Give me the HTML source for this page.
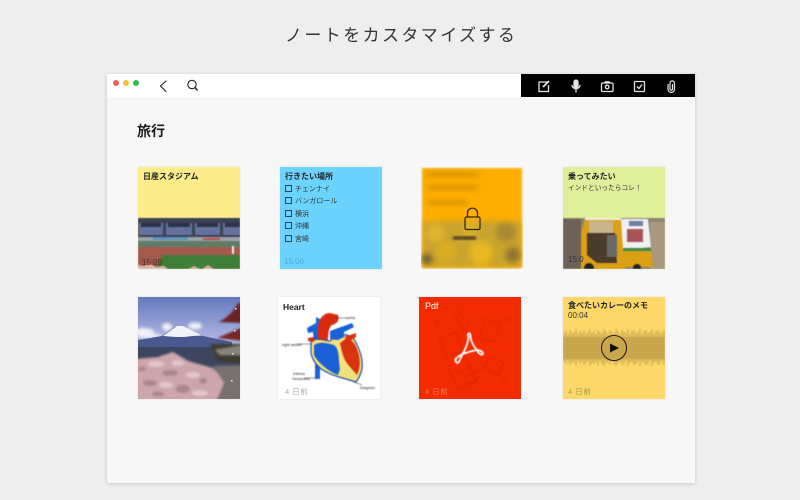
<!DOCTYPE html>
<html lang="ja"><head><meta charset="utf-8">
<style>
html,body{margin:0;padding:0}
body{width:800px;height:500px;background:#eeeeee;overflow:hidden;position:relative;font-family:"Liberation Sans","Noto Sans CJK JP",sans-serif;color:#222}
.title{position:absolute;left:285px;top:24px;font-size:17px;line-height:24px;letter-spacing:2.4px;color:#333;white-space:nowrap}
.win{position:absolute;left:107px;top:74px;width:588px;height:409px;background:#f7f7f7;box-shadow:0 1px 4px rgba(0,0,0,.16)}
.bar{position:absolute;left:107px;top:74px;width:588px;height:23px;background:#fff}
.blk{position:absolute;left:521px;top:74px;width:174px;height:23px;background:#000}
.dot{position:absolute;top:80px;width:6px;height:6px;border-radius:50%}
.h{position:absolute;left:137px;top:121px;font-size:14px;line-height:20px;font-weight:700;color:#1a1a1a}
.card{position:absolute;width:102px;height:102px;overflow:hidden;box-shadow:0 0 2px rgba(0,0,0,.1)}
.t{position:absolute;white-space:nowrap;font-size:8px;line-height:12px}
.b{font-weight:700;color:#222}
.list{font-size:7px;color:#333;left:15px}
.cb{position:absolute;left:5px;width:5px;height:5px;border:1px solid #2f4450}
svg{display:block;position:absolute;left:0;top:0}
.soft{filter:blur(.4px)}
</style></head><body>
<div class="title">ノートをカスタマイズする</div>
<div class="win"></div><div class="bar"></div><div class="blk"></div>
<div class="dot" style="left:113px;background:#ec5f5f"></div>
<div class="dot" style="left:123px;background:#f2c13b"></div>
<div class="dot" style="left:133px;background:#2fbe4a"></div>
<svg style="left:155px;top:76px" width="50" height="20" fill="none" stroke="#222" stroke-width="1.100"><path d="M11 5L5.500 10L11 15.500" stroke-linecap="round"/><circle cx="37" cy="8.500" r="4.200"/><path d="M40 11.500L42.500 14.500" stroke-width="1.500"/></svg>
<svg style="left:521px;top:74px" width="174" height="23" fill="none" stroke="#e4e4e4" stroke-width="1.300">
<path d="M26.500 8H18V17.500H27.500V11"/><path d="M22 13L28 7" stroke-width="1.900"/>
<rect x="53" y="6" width="4" height="8" rx="2" fill="#e4e4e4"/><path d="M51 11C51 16 59 16 59 11M55 15V18.500"/>
<rect x="80.500" y="9" width="11.500" height="8.500" rx="1"/><path d="M83.500 9L84.500 7.800H88L89 9"/><circle cx="86.200" cy="13" r="1.800"/>
<rect x="113.500" y="7.500" width="10" height="10" rx="1"/><path d="M116 12.500L118 14.500L121 10.500"/>
<path d="M147 10V15C147 19.500 153.500 19.500 153.500 15V9.500C153.500 6 149 6 149 9.500V15C149 16.500 151.500 16.500 151.500 15V10" stroke-width="1.200"/></svg>
<div class="h">旅行</div>

<!-- 1 -->
<div class="card" style="left:138px;top:167px;background:#fdec8a">
<svg class="soft" width="102" height="102">
<rect y="51" width="102" height="51" fill="#3b4254"/>
<g fill="#66709f"><rect x="1" y="56" width="24" height="12"/><rect x="28" y="56" width="26" height="12"/><rect x="57" y="56" width="25" height="12"/><rect x="85" y="56" width="17" height="12"/></g>
<g fill="#2c3248"><rect x="3" y="56" width="20" height="4"/><rect x="30" y="56" width="22" height="4"/><rect x="59" y="56" width="21" height="4"/><rect x="87" y="56" width="15" height="4"/></g>
<rect y="70" width="102" height="4" fill="#9aa4a8"/><rect x="15" y="70" width="35" height="3" fill="#5d93bd"/>
<rect x="65" y="71" width="17" height="2" fill="#c24848"/>
<rect y="74" width="102" height="7" fill="#5f7d66"/>
<rect y="80" width="102" height="9" fill="#a65a4c"/>
<path d="M0 88H102V102H0Z" fill="#9c5a4d"/><path d="M25 88H102V102H17Z" fill="#3f7d39"/>
<rect x="94" y="79" width="2" height="8" fill="#eee"/>
<path d="M0 98L6 99L12 97L18 100L26 99L30 102H0Z" fill="#d9b8b0"/><path d="M50 102L56 99L62 102M64 102L70 98L76 102" fill="#d8a8a0"/></svg>
<div class="t b" style="left:5px;top:4px">日産スタジアム</div>
<div class="t" style="left:4px;top:90px;color:#5b2a1f">15:09</div></div>

<!-- 2 -->
<div class="card" style="left:280px;top:167px;background:#6bd3fe">
<div class="t b" style="left:5px;top:4px">行きたい場所</div>
<div class="cb" style="top:18px"></div><div class="t list" style="top:17px">チェンナイ</div>
<div class="cb" style="top:30px"></div><div class="t list" style="top:29px">バンガロール</div>
<div class="cb" style="top:43px"></div><div class="t list" style="top:42px">横浜</div>
<div class="cb" style="top:55px"></div><div class="t list" style="top:54px">沖縄</div>
<div class="cb" style="top:68px"></div><div class="t list" style="top:67px">宮崎</div>
<div class="t" style="left:4px;top:89px;color:#4ea8d0">15:06</div></div>

<!-- 3 -->
<div class="card" style="left:421px;top:167px;box-shadow:none;background:#f7f7f7">
<svg width="102" height="102"><defs><filter id="bl" x="-10%" y="-10%" width="120%" height="120%"><feGaussianBlur stdDeviation="3"/></filter><filter id="bl2"><feGaussianBlur stdDeviation="1"/></filter></defs>
<g filter="url(#bl2)"><rect x="1" y="1" width="100" height="100" fill="#ffae00"/></g>
<g filter="url(#bl)">
<rect x="2" y="54" width="98" height="46" fill="#c9a32d"/>
<rect x="5" y="6" width="52" height="3" fill="#b8820e"/><rect x="6" y="19" width="50" height="3" fill="#b8820e"/><rect x="6" y="34" width="40" height="3" fill="#b8820e"/>
<circle cx="15" cy="66" r="9" fill="#e0b52e"/><circle cx="85" cy="65" r="10" fill="#a98a30"/><circle cx="25" cy="85" r="10" fill="#dcae22"/><circle cx="60" cy="86" r="12" fill="#e6b820"/><circle cx="92" cy="88" r="8" fill="#8f7630"/><circle cx="6" cy="92" r="6" fill="#6f6436"/><circle cx="50" cy="62" r="8" fill="#d8b02c"/>
</g>
<rect x="32" y="69" width="23" height="4" fill="#5f4a22" filter="url(#bl2)"/></svg>
<svg width="102" height="102" fill="none" stroke="#33280f" stroke-width="1.300"><rect x="44" y="50" width="15" height="12.500" rx="1.500"/><path d="M46.500 50V46C46.500 39.500 56.500 39.500 56.500 46V50"/></svg></div>

<!-- 4 -->
<div class="card" style="left:563px;top:167px;background:#e0f09a">
<svg class="soft" width="102" height="102">
<rect y="51" width="102" height="51" fill="#8f8474"/>
<rect x="0" y="52" width="18" height="50" fill="#6e6258"/>
<rect x="87" y="55" width="15" height="47" fill="#a8987f"/>
<path d="M18 102L18 66L22 52H60L62 84H88L90 100L62 100V102Z" fill="#dca014"/>
<path d="M24 66H52L54 96H34L24 88Z" fill="#4a3b2a"/><path d="M26 54H50V66H26Z" fill="#c9b48c"/><path d="M44 68H54V90H44Z" fill="#6b6a66"/>
<path d="M22 51H58V53H22Z" fill="#eee"/>
<path d="M58 52H85L88 80L60 83Z" fill="#eef0f2"/><rect x="64" y="62" width="16" height="13" fill="#a7555a"/><rect x="66" y="54" width="14" height="5" fill="#6f7fa0"/>
<rect x="60" y="81" width="28" height="3" fill="#3f8a48"/>
<circle cx="26" cy="101" r="5" fill="#222"/><circle cx="74" cy="101" r="4" fill="#222"/>
</svg>
<div class="t b" style="left:5px;top:4px">乗ってみたい</div>
<div class="t" style="left:5px;top:16px;color:#333;font-size:6.700px">インドといったらコレ！</div>
<div class="t" style="left:5px;top:87px;color:#333">15:0</div></div>

<!-- 5 -->
<div class="card" style="left:138px;top:297px">
<svg width="102" height="102"><defs>
<linearGradient id="sky" x1="0" y1="0" x2="0" y2="1"><stop offset="0" stop-color="#6478bf"/><stop offset=".4" stop-color="#aab4df"/></linearGradient>
<filter id="s1"><feGaussianBlur stdDeviation="1.500"/></filter><filter id="s2"><feGaussianBlur stdDeviation="1"/></filter></defs>
<rect width="102" height="102" fill="url(#sky)"/>
<g filter="url(#s1)" fill="#f0f1f6"><ellipse cx="6" cy="35" rx="10" ry="4"/><ellipse cx="29" cy="30" rx="5" ry="4"/><ellipse cx="57" cy="29" rx="7" ry="3.500"/><ellipse cx="12" cy="39" rx="12" ry="2.500"/></g>
<path d="M0 43L24 39L37 30H46L65 39L94 45V52H0Z" fill="#4a5a90"/>
<path d="M25 39L39 29H45L64 38.500L54 39L46 40L38 40Z" fill="#f3f4fa"/>
<rect y="50" width="102" height="28" fill="#3d4660"/>
<g filter="url(#s2)"><path d="M-3 62L20 60L35 55L50 64L75 71L88 85L105 85V105H-3Z" fill="#cda5ab"/>
<g fill="#a9858c"><ellipse cx="32" cy="76" rx="8" ry="3"/><ellipse cx="12" cy="86" rx="7" ry="3"/><ellipse cx="45" cy="92" rx="7" ry="4"/><ellipse cx="65" cy="84" rx="4" ry="3"/><ellipse cx="20" cy="97" rx="6" ry="2.500"/><ellipse cx="4" cy="72" rx="4" ry="2.500"/></g>
<g fill="#e3c6ca"><ellipse cx="18" cy="67" rx="8" ry="3"/><ellipse cx="40" cy="66" rx="6" ry="3"/><ellipse cx="55" cy="78" rx="7" ry="3"/><ellipse cx="28" cy="88" rx="7" ry="3"/><ellipse cx="62" cy="96" rx="8" ry="3"/></g>
<path d="M75 69L105 68V105H78L86 86Z" fill="#79706f"/>
<path d="M72 47H105V67L80 64Z" fill="#3d3a32"/>
<path d="M80 25C88 22 96 14 100 6H105V26Z" fill="#6c2226"/><path d="M79 41L105 30V44Z" fill="#74262a"/><path d="M77 53L105 48V58H82Z" fill="#8a8478"/></g>
<g fill="#eee"><rect x="97" y="11" width="1.500" height="1.500"/><rect x="96" y="33" width="1.500" height="1.500"/><rect x="94" y="56" width="1.500" height="1.500"/><rect x="93" y="83" width="1.500" height="1.500"/></g></svg></div>

<!-- 6 -->
<div class="card" style="left:278px;top:297px;background:#fff">
<svg class="soft" width="102" height="102">
<path d="M29 31L38 26V20L42 22V82H37V56L35 35L30 36Z" fill="#1a62d8"/>
<path d="M33 44C40 40 48 44 52 44C60 36 70 36 76 42C85 58 88 72 78 85L68 82C52 78 36 72 33 56Z" fill="#f2e27a" stroke="#1f4fa8" stroke-width="1.200"/>
<path d="M36 48C42 44 50 46 56 48C62 52 60 62 62 72L60 78C50 74 40 66 36 58Z" fill="#1a5fd6"/>
<path d="M40 42C38 28 42 16 52 16L60 18C62 24 58 27 54 28C51 30 50 36 50 43Z" fill="#d92a10"/>
<path d="M52 42V34L74 26L76 30L66 35V40L60 43Z" fill="#1a62d8"/>
<path d="M30 41L36 40V45L30 44Z" fill="#d92a10"/>
<path d="M62 46L70 40L76 46C82 56 84 68 79 78L72 70C66 64 64 56 62 46Z" fill="#d8330f"/>
<path d="M66 40L78 36V40L72 44Z" fill="#d8330f"/>
<g stroke="#333" fill="none" stroke-width=".6"><path d="M58 21H68M19 47H34M26 81H37M76 85L84 88"/></g>
<text x="68" y="22" font-size="4" fill="#222">aorta</text><text x="4" y="49" font-size="4" fill="#222">right atrium</text><text x="15" y="78" font-size="4" fill="#222">inferior</text><text x="14" y="83" font-size="4" fill="#222">Venacava</text><text x="82" y="92" font-size="4" fill="#222">Diagram</text></svg>
<div class="t b" style="left:5px;top:4px;font-size:8.500px">Heart</div>
<div class="t" style="left:7px;top:89px;color:#aaa;font-size:7.500px;letter-spacing:.5px">4 日前</div></div>

<!-- 7 -->
<div class="card" style="left:419px;top:297px;background:#f32c00">
<svg class="soft" width="102" height="102" fill="none">
<g stroke="#d42505" stroke-width=".7"><path d="M32 12L46 36M38 9L50 30"/><rect x="22" y="38" width="18" height="20" transform="rotate(-20 30 45)"/><rect x="62" y="24" width="16" height="20" transform="rotate(15 72 36)"/><rect x="32" y="66" width="20" height="26" transform="rotate(-25 38 76)"/><rect x="66" y="62" width="16" height="14" transform="rotate(25 75 70)"/><path d="M38 76L56 68M41 82L59 74M45 88L62 80"/><circle cx="18" cy="25" r="2"/><circle cx="88" cy="22" r="2"/><circle cx="85" cy="82" r="2"/></g>
<path d="M37.500 65.500C34.500 62.500 38 60 43.500 57C47.500 50 50 43 49 38.500C48.500 35.500 51.500 35.500 51.500 38.500C51.500 43 54 49 58 53C61 53 64 55 64 56.500C64 58.500 60 58 58 53C52.500 54 47.500 55.500 43.500 57C41 62.500 39.500 67.500 37.500 65.500Z" stroke="#fff" stroke-width="1.800" stroke-linejoin="round"/></svg>
<div class="t" style="left:6px;top:3px;color:#fff;font-size:9px;line-height:13px">Pdf</div>
<div class="t" style="left:6px;top:89px;color:#f57a5c;font-size:7.500px;letter-spacing:.5px">4 日前</div></div>

<!-- 8 -->
<div class="card" style="left:563px;top:297px;background:#fdd767">
<svg width="102" height="102">
<g class="soft"><rect y="40" width="102" height="22" fill="#c4a349"/>
<path stroke="#caa94f" stroke-width="1.200" fill="none" d="M1 36V65M3 34V67M5 37V64M7 33V68M9 36V66M11 35V65M13 32V69M15 37V64M17 34V67M19 36V65M21 33V68M23 37V66M25 35V64M27 32V69M29 36V66M31 34V67M33 37V65M35 33V68M37 35V64M39 36V67M41 32V69M43 34V65M45 37V66M47 33V68M49 35V64M51 36V67M53 32V69M55 34V66M57 37V65M59 33V68M61 35V67M63 36V64M65 32V69M67 37V66M69 34V65M71 33V68M73 36V67M75 35V64M77 32V69M79 37V65M81 34V66M83 33V68M85 36V67M87 35V64M89 32V69M91 37V66M93 34V65M95 33V68M97 36V67M99 35V64M101 33V68"/></g>
<circle cx="51" cy="51" r="12.500" fill="none" stroke="#1c1a14" stroke-width="1"/><path d="M47 46.500L56 51L47 55.500Z" fill="#141208"/></svg>
<div class="t b" style="left:5px;top:3px">食べたいカレーのメモ</div>
<div class="t" style="left:5px;top:13px;color:#333">00:04</div>
<div class="t" style="left:5px;top:89px;color:#a89858;font-size:7.500px;letter-spacing:.5px">4 日前</div></div>
</body></html>
